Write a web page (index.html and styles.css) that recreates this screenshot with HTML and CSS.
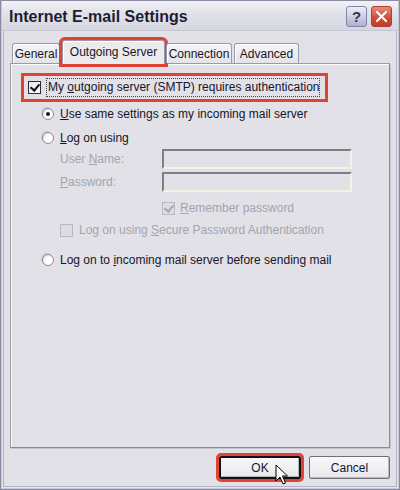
FILE: index.html
```html
<!DOCTYPE html>
<html>
<head>
<meta charset="utf-8">
<link rel="stylesheet" href="styles.css">
</head>
<body>
<div class="window">
  <div class="titlebar">
    <div class="title">Internet E-mail Settings</div>
    <div class="tbtn help">?</div>
    <div class="tbtn close">
      <svg width="21" height="21" viewBox="0 0 21 21"><path d="M5.5 5.5 L15.5 15.5 M15.5 5.5 L5.5 15.5" stroke="#fff" stroke-width="2.4" stroke-linecap="round"/></svg>
    </div>
  </div>
  <div class="client">
    <div class="tabs">
      <div class="tab t-general">General</div>
      <div class="tab t-out selected">Outgoing Server</div>
      <div class="tab t-conn">Connection</div>
      <div class="tab t-adv">Advanced</div>
    </div>
    <div class="panel">
      <div class="row chkrow hl">
        <span class="cb checked"></span>
        <span class="focus">My <u>o</u>utgoing server (SMTP) requires authentication</span>
      </div>
      <div class="row r1"><span class="radio on"></span><span><u>U</u>se same settings as my incoming mail server</span></div>
      <div class="row r2"><span class="radio"></span><span><u>L</u>og on using</span></div>
      <div class="row field f1"><span class="lbl dis">User <u>N</u>ame:</span><span class="input"></span></div>
      <div class="row field f2"><span class="lbl dis"><u>P</u>assword:</span><span class="input"></span></div>
      <div class="row rem"><span class="cb checked disabled"></span><span class="dis"><u>R</u>emember password</span></div>
      <div class="row spa"><span class="cb disabled"></span><span class="dis">Log on using <u>S</u>ecure Password Authentication</span></div>
      <div class="row r3"><span class="radio"></span><span>Log on to <u>i</u>ncoming mail server before sending mail</span></div>
    </div>
    <div class="buttons">
      <div class="btn ok">OK</div>
      <div class="btn cancel">Cancel</div>
    </div>
  </div>
  <svg class="cursor" width="14" height="24" viewBox="0 0 14 24"><path d="M1 1 L1 17 L5 13 L8 20 L10.5 19 L7.5 12 L12.5 12 Z" fill="#fff" stroke="#000" stroke-width="1" stroke-linejoin="round"/></svg>
</div>
</body>
</html>
```
FILE: styles.css
```css
* { box-sizing: border-box; }
html, body { margin: 0; padding: 0; background: #e2e1e7; }
body { font-family: "Liberation Sans", Arial, sans-serif; font-size: 12px; color: #15152a; }
u { text-decoration: underline; text-underline-offset: 1px; }

.window {
  position: relative;
  width: 400px;
  height: 490px;
  border: 1px solid #8b8ba6;
  box-shadow: inset 0 0 0 1px #c9c9d6, inset 0 0 0 2px #e6e6ec, inset 0 0 0 3px #b2b2c2;
  background: #e2e1e7;
  display: flex;
  flex-direction: column;
  overflow: hidden;
}

.titlebar {
  height: 30px;
  margin: 0 1px;
  display: flex;
  align-items: center;
  padding: 0 6px 0 7px;
  background: linear-gradient(#f2f2f6 0%, #e2e2ea 40%, #d6d6e0 100%);
  border-bottom: 1px solid #c6c6d2;
}
.title { font-weight: bold; font-size: 16px; color: #1d1d30; flex: 1; padding-top: 3px; }
.tbtn {
  width: 21px; height: 21px;
  border-radius: 3px;
  display: flex; align-items: center; justify-content: center;
  margin-top: 2px;
}
.help {
  background: linear-gradient(#eeeef8, #aeb0cf);
  border: 1px solid #8082a8;
  color: #33334d;
  font-size: 15px;
  font-weight: bold;
  margin-right: 4px;
}
.close {
  background: linear-gradient(#ea8b78, #cd4a36 60%, #c33c2a);
  border: 1px solid #b04030;
}

.client { flex: 1; display: flex; flex-direction: column; padding: 0 9px 0 9px; }

.tabs { height: 32px; display: flex; align-items: flex-end; padding-left: 2px; position: relative; z-index: 2; }
.tab {
  height: 20px;
  border: 1px solid #9a9aa8;
  border-bottom: none;
  border-radius: 3px 3px 0 0;
  background: linear-gradient(#f4f4f6, #e4e4e8);
  display: flex; align-items: center; justify-content: center;
  box-shadow: inset 1px 1px 0 #fff;
  white-space: nowrap;
}
.t-general { width: 48px; }
.t-out { width: 103px; margin-left: 2px; }
.t-conn { width: 66px; margin-left: 1px; }
.t-adv { width: 65px; margin-left: 2px; }
.tab.selected {
  height: 24px;
  background: #ebebee;
  outline: 3px solid #e24234;
  padding-bottom: 2px;
  margin-bottom: -1px;
  border-top: 1px solid #9a9aa8;
}

.panel {
  height: 385px;
  border: 1px solid #9a9aa8;
  border-right-color: #8a8a98;
  border-bottom-color: #8a8a98;
  box-shadow: inset 1px 1px 0 #fbfbfb, 1px 1px 0 #c4c4cc;
  background: #e2e1e7;
  display: flex;
  flex-direction: column;
}

.row { display: flex; align-items: center; }
.chkrow {
  margin: 12px 0 0 13px;
  width: 301px;
  height: 23px;
  outline: 3px solid #e24234;
  padding-left: 4px;
}
.focus { margin-left: 5px; border: 1px dotted #444; padding: 1px 0 1px 1px; line-height: 15px; }

.cb {
  width: 13px; height: 13px;
  border: 1px solid #2b2b3a;
  background: linear-gradient(135deg, #e8e8ec, #fbfbfb);
  position: relative;
  flex: none;
}
.cb.checked::after {
  content: "";
  position: absolute;
  left: 3px; top: 0px;
  width: 4px; height: 7px;
  border: solid #111;
  border-width: 0 2px 2px 0;
  transform: rotate(40deg);
}
.cb.disabled { border-color: #b8b8c0; background: #dcdce2; }
.cb.disabled.checked::after { border-color: #a8a8b0; }

.radio {
  width: 12px; height: 12px;
  border-radius: 50%;
  border: 1px solid #8d8d9a;
  background: radial-gradient(circle at 65% 65%, #ffffff 40%, #d8d8de 100%);
  box-shadow: -1px -1px 0 #c8c8d0;
  position: relative;
  flex: none;
  margin-right: 6px;
}
.radio.on::after {
  content: "";
  position: absolute;
  left: 3px; top: 3px;
  width: 4px; height: 4px;
  border-radius: 50%;
  background: #1a1a26;
}

.r1 { margin: 5px 0 0 31px; height: 20px; }
.r2 { margin: 4px 0 0 31px; height: 20px; }
.field { margin-left: 49px; height: 20px; }
.f1 { margin-top: 1px; }
.f2 { margin-top: 3px; }
.lbl { width: 102px; }
.dis { color: #a4a4ae; }
.input {
  width: 190px; height: 20px;
  border: 2px solid;
  border-color: #7e7e86 #f4f2e4 #f4f2e4 #7e7e86;
  background: #e2e1e7;
}
.rem { margin: 7px 0 0 151px; height: 18px; }
.rem .cb { margin-right: 5px; }
.spa { margin: 4px 0 0 49px; height: 18px; }
.spa .cb { margin-right: 6px; }
.r3 { margin: 11px 0 0 31px; height: 20px; }

.buttons { display: flex; justify-content: flex-end; padding-top: 8px; gap: 8px; }
.btn {
  height: 23px;
  display: flex; align-items: center; justify-content: center;
  background: linear-gradient(#f8f8fa, #e8e8ec);
  border: 1px solid #707078;
  border-radius: 2px;
  box-shadow: inset -1px -1px 0 #b8b8c0;
}
.ok { width: 82px; border: 2px solid #111; outline: 3px solid #e24234; }
.cancel { width: 81px; }

.cursor { position: absolute; left: 274px; top: 463px; }
```
